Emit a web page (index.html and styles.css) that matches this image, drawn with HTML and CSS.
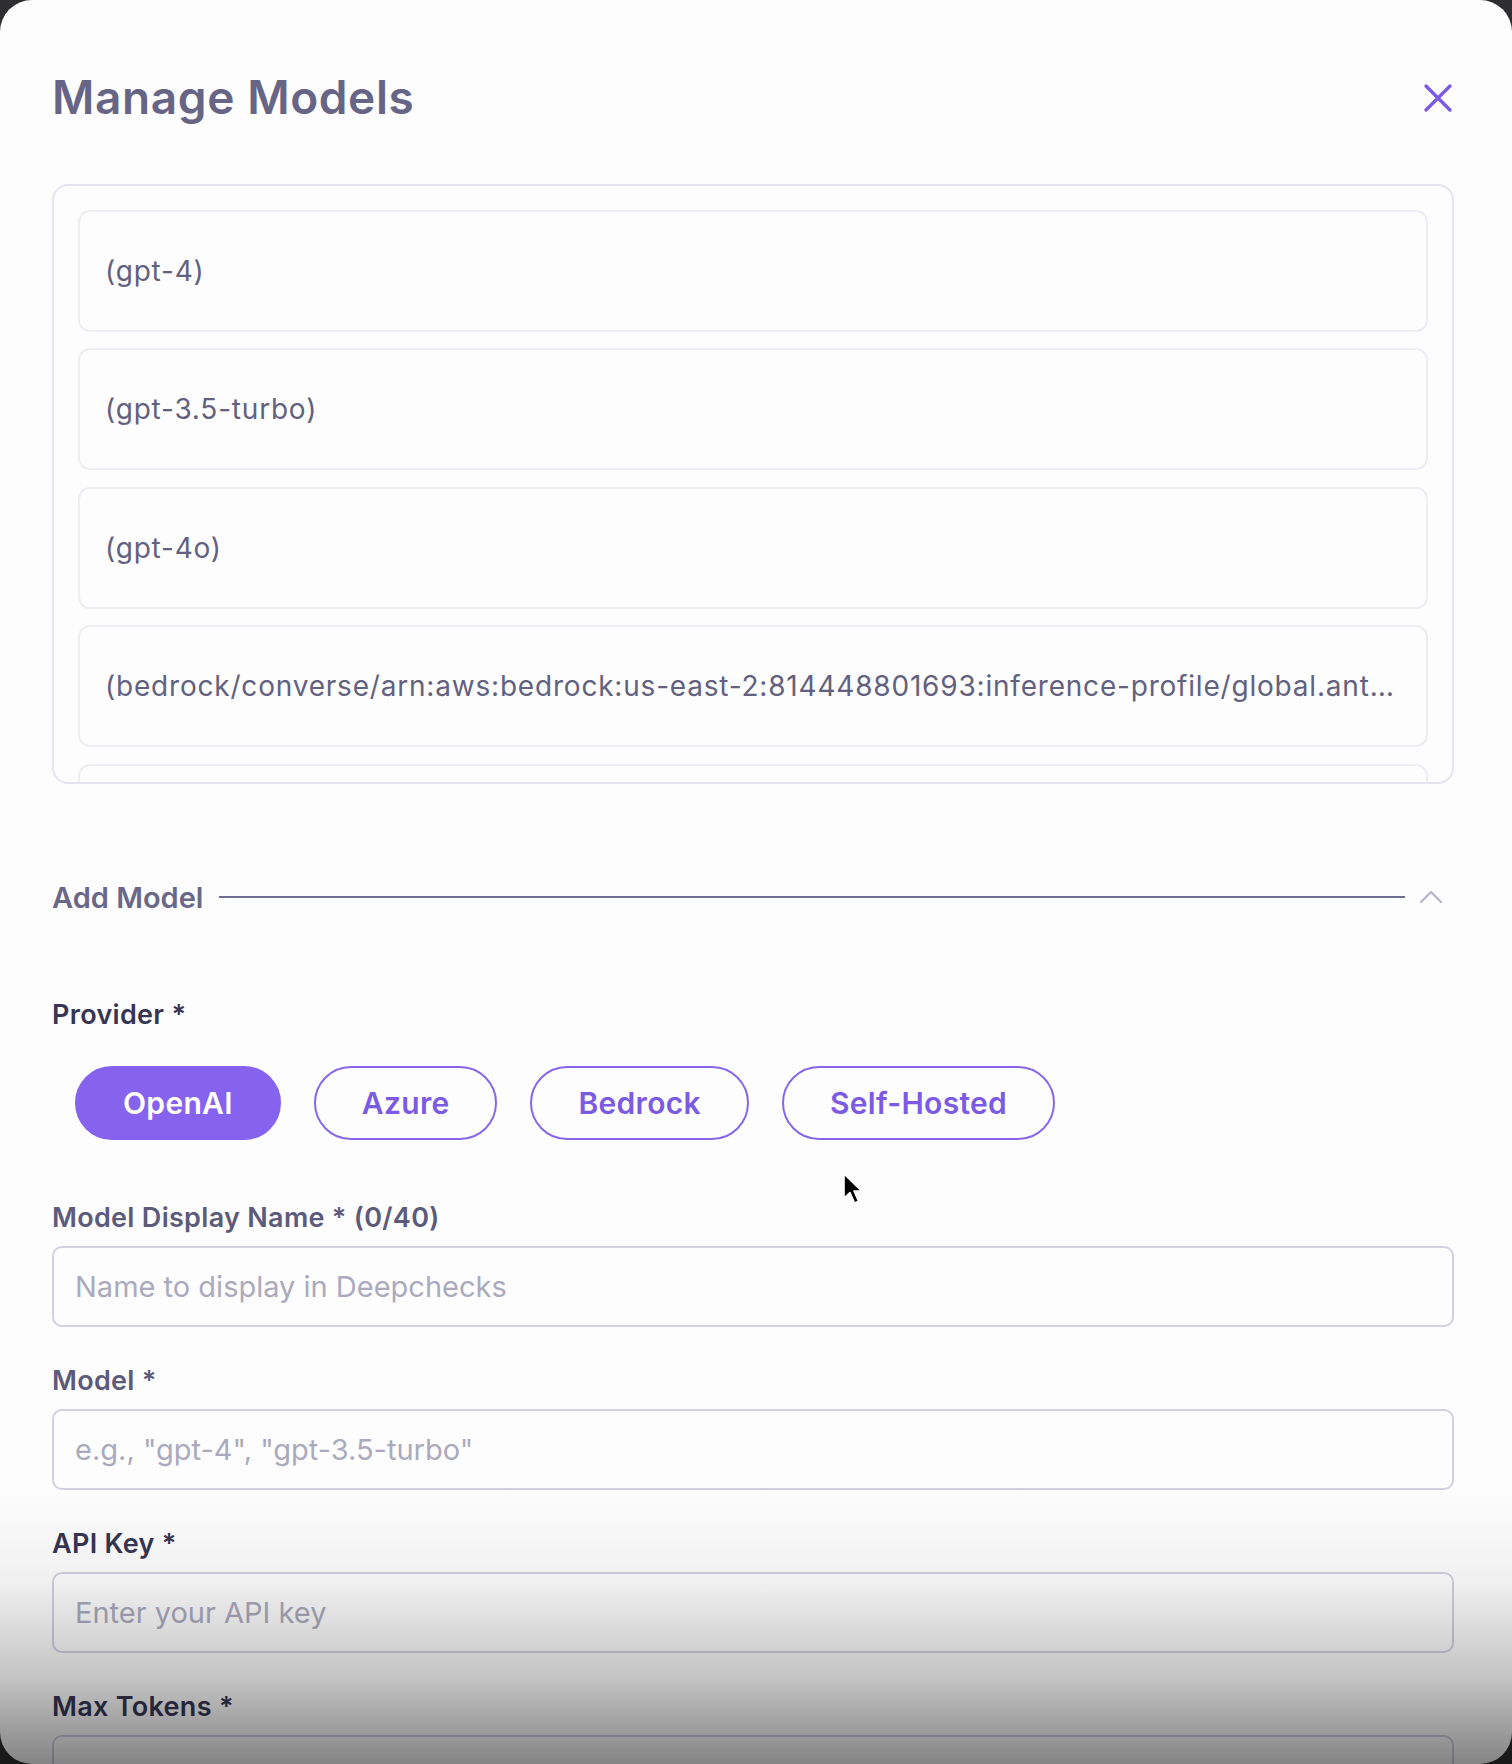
FILE: index.html
```html
<!DOCTYPE html>
<html lang="en">

<head>
    <meta charset="UTF-8">
    <meta name="viewport" content="width=device-width, initial-scale=1.0">
    <title>Manage Models</title>
    <link rel="stylesheet" href="styles.css">
</head>

<body>
    <div class="backdrop">
        <div class="modal">
            <header class="modal-header">
                <h1 class="modal-title">Manage Models</h1>
                <button class="close-btn" aria-label="Close">
                    <svg width="30" height="30" viewBox="0 0 30 30">
                        <path d="M3 3 L27 27 M27 3 L3 27" stroke="#7b5be4" stroke-width="3.4" stroke-linecap="round" fill="none" />
                    </svg>
                </button>
            </header>

            <div class="model-list">
                <div class="model-item">(gpt-4)</div>
                <div class="model-item">(gpt-3.5-turbo)</div>
                <div class="model-item">(gpt-4o)</div>
                <div class="model-item">(bedrock/converse/arn:aws:bedrock:us-east-2:814448801693:inference-profile/global.anthropic.claude-sonnet-4)</div>
                <!-- only the top edge of the next row is visible -->
                <div class="model-item"></div>
            </div>

            <div class="section-head">
                <span class="section-title">Add Model</span>
                <span class="section-line"></span>
                <svg class="chevron" width="24" height="14" viewBox="0 0 24 14">
                    <path d="M2 12 L12 2 L22 12" stroke="#b9b8c9" stroke-width="2.4" stroke-linecap="round" stroke-linejoin="round" fill="none" />
                </svg>
            </div>

            <div class="provider-field">
                <label class="field-label strong">Provider *</label>
                <div class="provider-group">
                    <button class="pill active">OpenAI</button>
                    <button class="pill">Azure</button>
                    <button class="pill">Bedrock</button>
                    <button class="pill">Self-Hosted</button>
                </div>
            </div>

            <div class="text-field first">
                <label class="field-label">Model Display Name * (0/40)</label>
                <input class="text-input" type="text" placeholder="Name to display in Deepchecks">
            </div>
            <div class="text-field">
                <label class="field-label">Model *</label>
                <input class="text-input" type="text" placeholder="e.g., &quot;gpt-4&quot;, &quot;gpt-3.5-turbo&quot;">
            </div>
            <div class="text-field">
                <label class="field-label strong">API Key *</label>
                <input class="text-input" type="text" placeholder="Enter your API key">
            </div>
            <div class="text-field">
                <label class="field-label strong">Max Tokens *</label>
                <input class="text-input" type="text">
            </div>
        </div>

        <div class="fade"></div>

        <svg class="cursor" width="22" height="34" viewBox="0 0 22 34">
            <path d="M2 2 L2 26 L8 20.5 L12.5 31 L16.5 29.3 L12 19 L19.5 19 Z" fill="#000" stroke="#fff" stroke-width="1.6" stroke-linejoin="round" />
        </svg>
    </div>
</body>

</html>
```

FILE: styles.css
```css
* {
    box-sizing: border-box;
}

body {
    margin: 0;
    background-color: #2e2e30;
    font-family: Inter, "Noto Sans", sans-serif;
}

.backdrop {
    position: relative;
    width: 1512px;
    height: 1764px;
    overflow: hidden;
}

.modal {
    height: 1764px;
    background-color: #fdfdfe;
    border-radius: 32px;
    padding: 70px 58px 0 52px;
    overflow: hidden;
}

.modal-header {
    display: flex;
    justify-content: space-between;
    align-items: center;
    height: 55px;
}

.modal-title {
    margin: 0;
    font-size: 46px;
    line-height: 55px;
    font-weight: 600;
    color: #676585;
    letter-spacing: 0.6px;
}

.close-btn {
    display: flex;
    padding: 0;
    margin-right: 1px;
    border: 0;
    background: none;
}

.model-list {
    display: flex;
    flex-direction: column;
    gap: 16.4px;
    height: 600px;
    margin-top: 59px;
    padding: 24px 24px 0;
    border: 2px solid #e5e4ef;
    border-radius: 16px;
    overflow: hidden;
}

.model-item {
    flex: none;
    height: 122px;
    padding: 0 24px 0 25px;
    border: 2px solid #ededf4;
    border-radius: 12px;
    font-size: 28px;
    line-height: 118px;
    letter-spacing: 0.8px;
    color: #62617f;
    white-space: nowrap;
    overflow: hidden;
    text-overflow: ellipsis;
}

.section-head {
    display: flex;
    align-items: center;
    height: 36px;
    margin-top: 95px;
}

.section-title {
    font-size: 29px;
    font-weight: 600;
    color: #6a6888;
}

.section-line {
    flex: 1;
    height: 2px;
    margin: 0 14px 0 16px;
    background-color: #716f8f;
}

.chevron {
    margin-right: 11px;
}

.provider-field {
    margin-top: 84px;
}

.field-label {
    display: block;
    font-size: 27px;
    line-height: 32px;
    font-weight: 600;
    letter-spacing: 0.3px;
    color: #5c5b7b;
}

.field-label.strong {
    color: #363553;
}

.provider-group {
    display: flex;
    gap: 33px;
    margin-top: 35px;
    padding-left: 23px;
}

.pill {
    height: 74px;
    padding: 0 46px;
    border: 2px solid #8767e8;
    border-radius: 37px;
    background-color: #fdfdfe;
    color: #7b5be4;
    font-family: inherit;
    font-size: 30px;
    font-weight: 600;
    letter-spacing: 0.3px;
}

.pill.active {
    background-color: #8663ee;
    border-color: #8663ee;
    color: #ffffff;
}

.text-field {
    margin-top: 37.5px;
}

.text-field.first {
    margin-top: 61.5px;
}

.text-input {
    display: block;
    width: 100%;
    height: 81px;
    margin-top: 12.5px;
    padding: 0 21px;
    border: 2px solid #d1d0e1;
    border-radius: 10px;
    background-color: #fdfdfe;
    font-family: inherit;
    font-size: 29px;
    color: #333250;
}

.text-input::placeholder {
    color: #abaabd;
}

.fade {
    position: absolute;
    left: 0;
    right: 0;
    bottom: 0;
    height: 280px;
    background: linear-gradient(to bottom, rgba(0, 0, 0, 0) 0%, rgba(0, 0, 0, 0.05) 35%, rgba(0, 0, 0, 0.23) 70%, rgba(0, 0, 0, 0.48) 100%);
    pointer-events: none;
}

.cursor {
    position: absolute;
    left: 842px;
    top: 1172px;
}
```
